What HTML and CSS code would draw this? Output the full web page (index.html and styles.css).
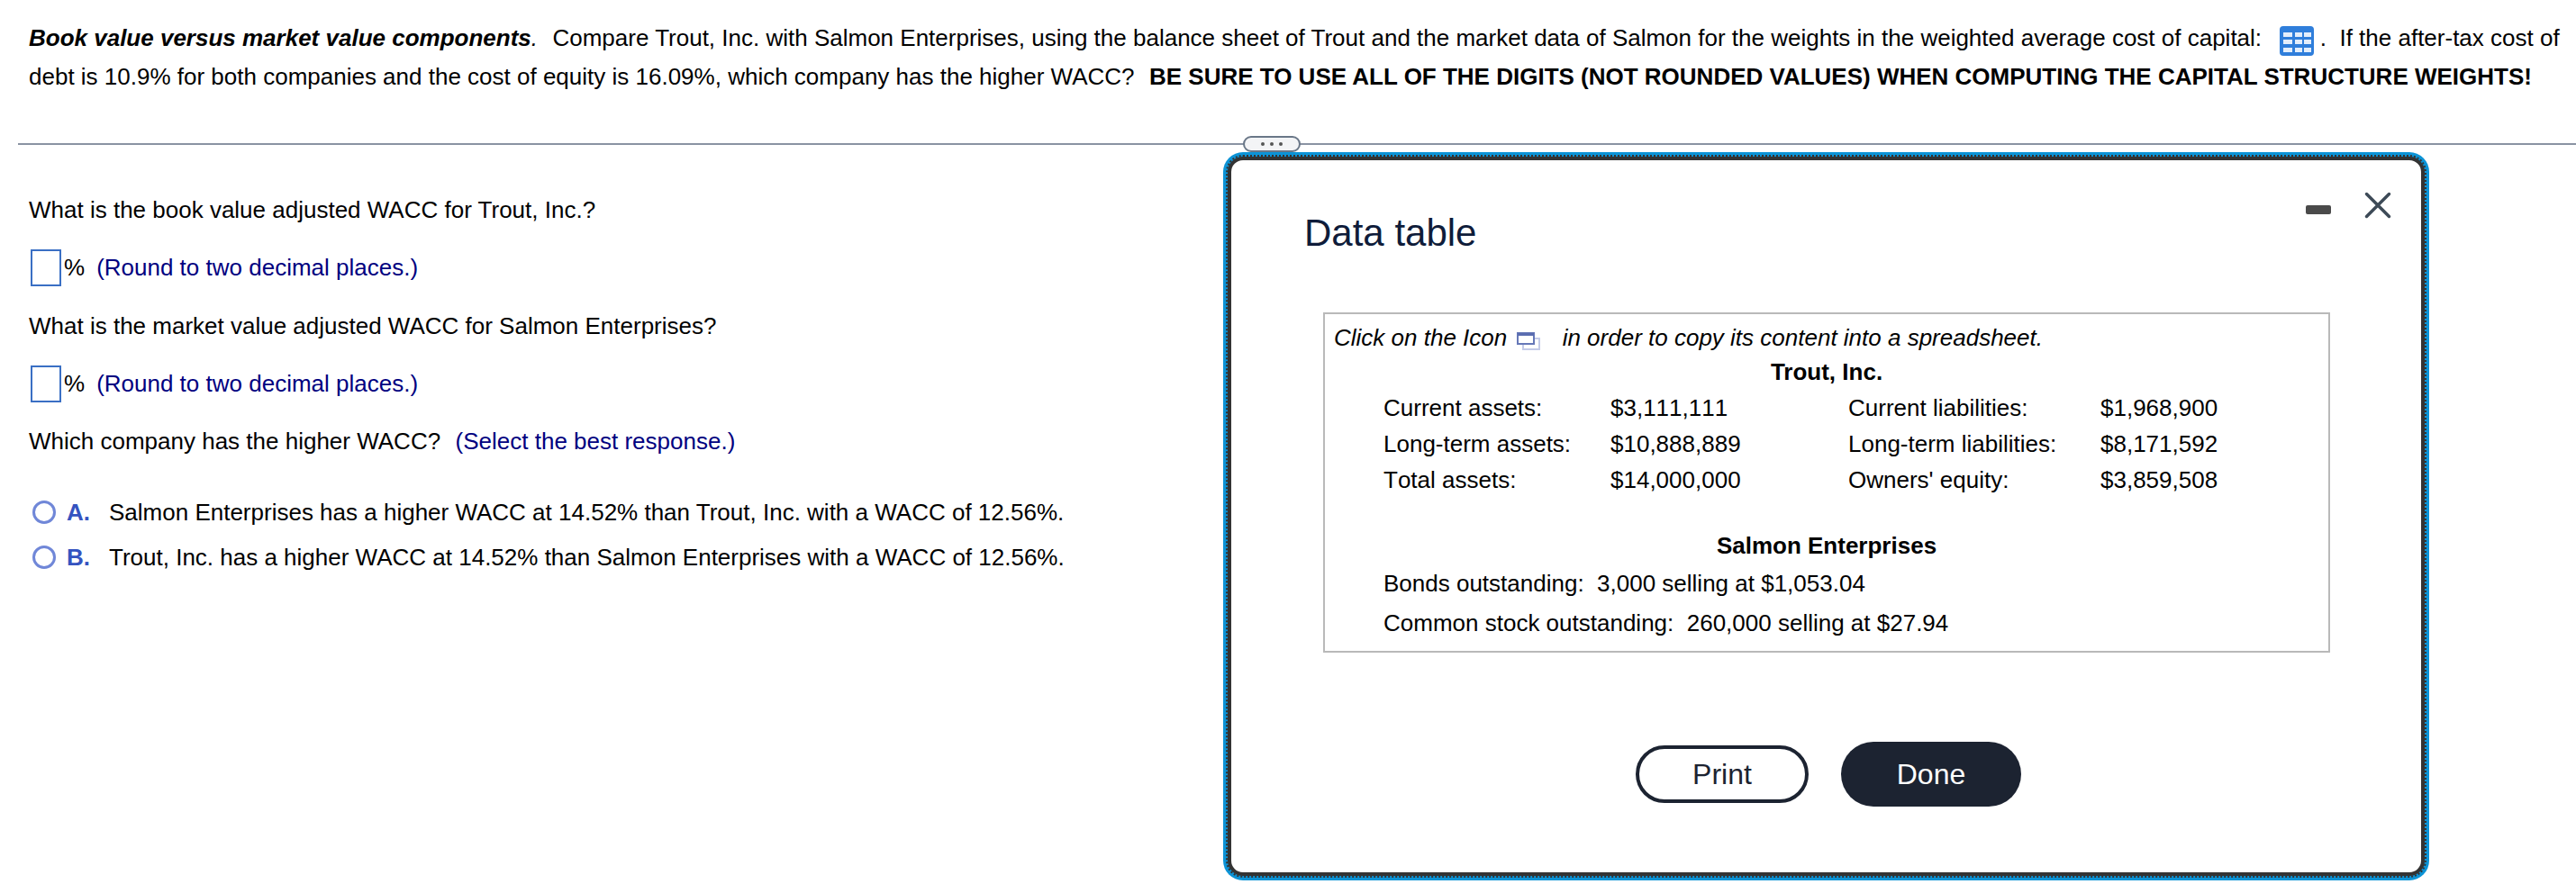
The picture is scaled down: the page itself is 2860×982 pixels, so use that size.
FILE: index.html
```html
<!DOCTYPE html>
<html lang="en">
<head>
    <meta charset="UTF-8">
    <meta name="viewport" content="width=device-width, initial-scale=1.0">
    <title>Data table</title>
    <link rel="stylesheet" href="styles.css">
</head>
<body>
    <p class="problem">
        <b><i>Book value versus market value components</i></b><i>.</i>&nbsp; <span class="lead">Compare Trout, Inc. with Salmon Enterprises, using the balance sheet of Trout and the market data of Salmon for the weights in the weighted average cost of capital:</span>&nbsp;
        <svg class="table-icon" width="38" height="33" viewBox="0 0 38 33">
            <rect width="38" height="33" rx="4" fill="#2f7edb"/>
            <g fill="#e4eefb">
                <rect x="4" y="7" width="10" height="5"/><rect x="17" y="7" width="8" height="5"/><rect x="27" y="7" width="8" height="5"/>
                <rect x="4" y="15" width="10" height="5"/><rect x="17" y="15" width="8" height="5"/><rect x="27" y="15" width="8" height="5"/>
                <rect x="4" y="24" width="10" height="5"/><rect x="17" y="24" width="8" height="5"/><rect x="27" y="24" width="8" height="5"/>
            </g>
        </svg>&nbsp;.&nbsp; If the after-tax cost of<br>
        debt is 10.9% for both companies and the cost of equity is 16.09%, which company has the higher WACC?&nbsp; <b class="lead">BE SURE TO USE ALL OF THE DIGITS (NOT ROUNDED VALUES) WHEN COMPUTING THE CAPITAL STRUCTURE WEIGHTS!</b>
    </p>

    <div class="divider">
        <div class="handle"><span></span><span></span><span></span></div>
    </div>

    <main class="questions">
        <p class="question">What is the book value adjusted WACC for Trout, Inc.?</p>
        <div class="answer">
            <span class="input"></span><span class="unit">%</span><span class="hint">(Round to two decimal places.)</span>
        </div>
        <p class="question">What is the market value adjusted WACC for Salmon Enterprises?</p>
        <div class="answer">
            <span class="input"></span><span class="unit">%</span><span class="hint">(Round to two decimal places.)</span>
        </div>
        <p class="question which">Which company has the higher WACC?&nbsp; <span class="hint">(Select the best response.)</span></p>
        <div class="options">
            <div class="option">
                <span class="radio"></span><b class="letter">A.</b>
                <span>Salmon Enterprises has a higher WACC at 14.52% than Trout, Inc. with a WACC of 12.56%.</span>
            </div>
            <div class="option">
                <span class="radio"></span><b class="letter">B.</b>
                <span>Trout, Inc. has a higher WACC at 14.52% than Salmon Enterprises with a WACC of 12.56%.</span>
            </div>
        </div>
    </main>

    <section class="modal">
        <div class="modal-head">
            <h2>Data table</h2>
            <div class="controls">
                <svg width="28" height="10" viewBox="0 0 28 10"><rect width="28" height="10" rx="2" fill="#4a4a4a"/></svg>
                <svg width="30" height="30" viewBox="0 0 30 30"><path d="M2.500 2.500 L27.500 27.500 M27.500 2.500 L2.500 27.500" stroke="#3d4a57" stroke-width="3.500" stroke-linecap="round"/></svg>
            </div>
        </div>

        <div class="sheet">
            <p class="sheet-note">Click on the Icon
                <svg class="copy-icon" width="26" height="20" viewBox="0 0 26 20">
                    <rect x="7" y="7" width="18" height="12" fill="#fff" stroke="#c4cbe8" stroke-width="2"/>
                    <rect x="1" y="1" width="18" height="12" fill="#fff" stroke="#6678b8" stroke-width="2"/>
                    <rect x="1" y="1" width="18" height="3" fill="#5a6db0"/>
                </svg>
                in order to copy its content into a spreadsheet.</p>
            <h3>Trout, Inc.</h3>
            <div class="balance">
                <span>Current assets:</span><span>$3,111,111</span><span>Current liabilities:</span><span>$1,968,900</span>
                <span>Long-term assets:</span><span>$10,888,889</span><span>Long-term liabilities:</span><span>$8,171,592</span>
                <span>Total assets:</span><span>$14,000,000</span><span>Owners' equity:</span><span>$3,859,508</span>
            </div>
            <h3 class="salmon">Salmon Enterprises</h3>
            <p class="market">Bonds outstanding:&nbsp; 3,000 selling at $1,053.04</p>
            <p class="market">Common stock outstanding:&nbsp; 260,000 selling at $27.94</p>
        </div>

        <div class="buttons">
            <button class="print">Print</button>
            <button class="done">Done</button>
        </div>
    </section>
</body>
</html>
```

FILE: styles.css
```css
*{
    margin: 0;
    padding: 0;
    box-sizing: border-box;
}
body{
    position: relative;
    height: 982px;
    overflow: hidden;
    background-color: #fff;
    color: #000;
    font-family: "Liberation Sans", Arial, sans-serif;
    font-size: 26px;
}
.problem{
    padding: 21px 0 0 32px;
    height: 159px;
    line-height: 43px;
    white-space: nowrap;
}
.lead{
    margin-left: 2px;
}
.table-icon{
    vertical-align: middle;
    margin: -5px 0 -7px 5px;
}
.divider{
    position: relative;
    height: 2px;
    margin-left: 20px;
    background-color: #8a93a3;
}
.handle{
    position: absolute;
    left: 1360px;
    top: -8px;
    width: 64px;
    height: 18px;
    display: flex;
    justify-content: center;
    align-items: center;
    gap: 6px;
    background-color: #f3f4f6;
    border: 2px solid #6a7788;
    border-radius: 9px;
}
.handle span{
    width: 4px;
    height: 4px;
    border-radius: 50%;
    background-color: #555;
}
.questions{
    padding: 52px 0 0 32px;
}
.question{
    line-height: 40px;
}
.which{
    margin-top: -1px;
}
.which .hint{
    margin-left: 2px;
}
.answer{
    display: flex;
    align-items: center;
    height: 41px;
    margin: 24px 0;
    padding-left: 2px;
}
.input{
    width: 34px;
    height: 41px;
    border: 2px solid #3a6fc4;
    background-color: #fff;
}
.unit{
    margin-left: 3px;
}
.hint{
    color: #000080;
}
.answer .hint{
    margin-left: 13px;
}
.options{
    margin-top: 34px;
}
.option{
    display: flex;
    align-items: center;
    height: 50px;
    padding-left: 4px;
}
.radio{
    width: 26px;
    height: 26px;
    border: 3px solid #7087d8;
    border-radius: 50%;
}
.letter{
    width: 47px;
    margin-left: 12px;
    color: #3553c0;
}
.modal{
    position: absolute;
    left: 1363px;
    top: 174px;
    width: 1329px;
    height: 799px;
    background-color: #fff;
    border: 4px solid #333;
    border-radius: 17px;
    box-shadow: 0 0 0 5px #0c93d6;
    outline: 2px dotted #333;
}
.modal-head{
    display: flex;
    justify-content: space-between;
    align-items: flex-start;
    height: 169px;
    padding: 35px 33px 0 81px;
}
.modal-head h2{
    margin-top: 21px;
    font-size: 42px;
    font-weight: normal;
    line-height: 50px;
    color: #0f1c3a;
}
.controls{
    display: flex;
    align-items: center;
    gap: 37px;
}
.controls svg:first-child{
    margin-top: 10px;
}
.sheet{
    width: 1118px;
    height: 378px;
    margin-left: 102px;
    padding: 8px 0 0 10px;
    border: 2px solid #b9b9b9;
}
.sheet-note{
    font-style: italic;
    line-height: 36px;
}
.copy-icon{
    vertical-align: -5px;
    margin: 0 17px 0 4px;
}
.sheet h3{
    margin-right: 10px;
    font-size: 26px;
    line-height: 40px;
    text-align: center;
}
.balance{
    display: grid;
    grid-template-columns: 252px 264px 280px auto;
    grid-auto-rows: 40px;
    align-items: center;
    padding-left: 55px;
    font-kerning: none;
}
.sheet .salmon{
    margin-top: 33px;
}
.market{
    padding-left: 55px;
    line-height: 44px;
}
.buttons{
    display: flex;
    justify-content: center;
    align-items: center;
    gap: 36px;
    margin-top: 99px;
    padding-left: 5px;
}
.buttons button{
    font-family: inherit;
    font-size: 32px;
    border-radius: 36px;
    color: #1c2331;
}
.print{
    width: 192px;
    height: 64px;
    background-color: #fff;
    border: 4px solid #1c2331;
}
.buttons .done{
    width: 200px;
    height: 72px;
    background-color: #1c2331;
    border: none;
    color: #fff;
}
```
